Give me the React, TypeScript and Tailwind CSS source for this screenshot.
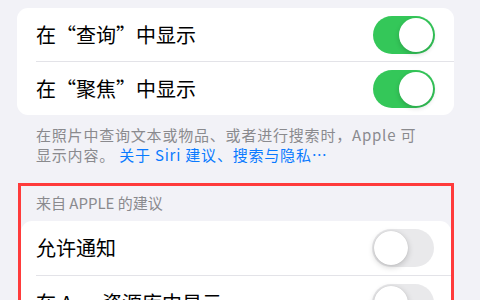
import React from "react";

function Toggle({ on }: { on: boolean }) {
  return on ? (
    <div className="relative h-[38px] w-[62px] shrink-0 rounded-full bg-[#34c759]">
      <div className="absolute right-[2px] top-[2px] h-[34px] w-[34px] rounded-full bg-white shadow-[0_2px_5px_rgba(0,0,0,0.18)]" />
    </div>
  ) : (
    <div className="relative h-[38px] w-[62px] shrink-0 rounded-full bg-[#e9e9eb]">
      <div className="absolute left-[2px] top-[2px] h-[34px] w-[34px] rounded-full bg-white shadow-[0_2px_6px_rgba(0,0,0,0.2),0_0_1px_rgba(0,0,0,0.15)]" />
    </div>
  );
}

const font = { fontFamily: '"Noto Sans CJK SC", Inter, sans-serif' };

export default function App() {
  return (
    <div
      className="h-[300px] w-[480px] overflow-hidden bg-[#f2f2f7] pl-[17px] pr-[26px] pt-[8px]"
      style={font}
    >
      <div className="rounded-[11px] bg-white">
        <div className="flex h-[53px] items-center justify-between pl-[19px] pr-[19px]">
          <span className="text-[20px] text-[#000]">在“查询”中显示</span>
          <Toggle on />
        </div>
        <div className="ml-[19px] h-px bg-[#e3e3e8]" />
        <div className="flex h-[53px] items-center justify-between pl-[19px] pr-[19px]">
          <span className="text-[20px] text-[#000]">在“聚焦”中显示</span>
          <Toggle on />
        </div>
      </div>

      <div className="pl-[19px] pr-[10px] pt-[10px] text-[15px] leading-[20px] tracking-[0.8px] text-[#8a8a8e]">
        在照片中查询文本或物品、或者进行搜索时，Apple 可
        <br />
        显示内容。 <span className="text-[#0a7aff]">关于 Siri 建议、搜索与隐私…</span>
      </div>

      <div className="ml-[1px] mt-[18px] border-[3px] border-b-0 border-[#ff3b3b]">
        <div className="flex h-[35px] items-center pl-[15px] text-[15px] text-[#8a8a8e]">
          来自 APPLE 的建议
        </div>
        <div className="rounded-[11px] bg-white">
          <div className="flex h-[54px] items-center justify-between pl-[15px] pr-[17px]">
            <span className="text-[20px] text-[#000]">允许通知</span>
            <Toggle on={false} />
          </div>
          <div className="ml-[15px] h-px bg-[#e3e3e8]" />
          <div className="flex h-[54px] items-center justify-between pl-[15px] pr-[17px]">
            <span className="text-[20px] text-[#000]">在 App 资源库中显示</span>
            <Toggle on={false} />
          </div>
        </div>
      </div>
    </div>
  );
}
